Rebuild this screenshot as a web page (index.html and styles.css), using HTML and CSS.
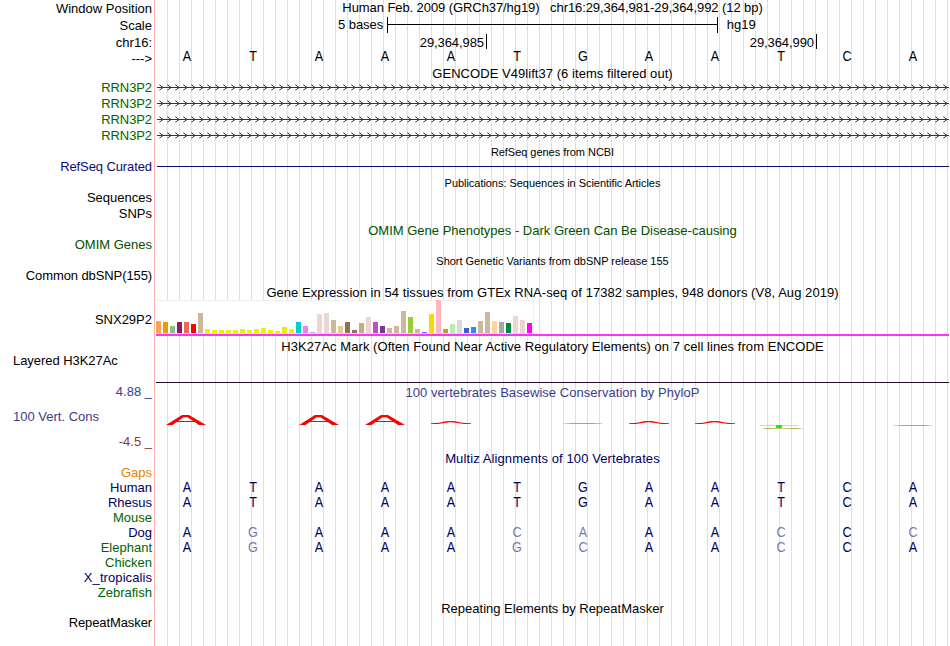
FILE: index.html
```
<!DOCTYPE html>
<html lang="en">
<head>
<meta charset="utf-8">
<title>Genome Browser</title>
<link rel="stylesheet" href="styles.css">
</head>
<body>
<main class="browser">
  <div class="row ruler"><div class="label">Window Position</div><div class="track title t-pos">Human Feb. 2009 (GRCh37/hg19) &nbsp; chr16:29,364,981-29,364,992 (12 bp)</div></div>
  <div class="row ruler"><div class="label">Scale</div><div class="track scale"><span class="scale-text">5 bases</span><span class="scale-bar"></span><span>hg19</span></div></div>
  <div class="row ruler"><div class="label">chr16:</div><div class="track ticks"><span class="tick first">29,364,985</span><span class="tick">29,364,990</span></div></div>
  <div class="row bases-row"><div class="label arrow-label">---&gt;</div><div class="track bases" data-seq="ATAAATGAATCA"></div></div>

  <div class="row head"><div class="track title t-gencode">GENCODE V49lift37 (6 items filtered out)</div></div>
  <div class="row gene"><div class="label green tight">RRN3P2</div><div class="track chevrons"></div></div>
  <div class="row gene"><div class="label green tight">RRN3P2</div><div class="track chevrons"></div></div>
  <div class="row gene"><div class="label green tight">RRN3P2</div><div class="track chevrons"></div></div>
  <div class="row gene"><div class="label green tight">RRN3P2</div><div class="track chevrons"></div></div>

  <div class="row sub"><div class="track title small">RefSeq genes from NCBI</div></div>
  <div class="row gene"><div class="label blue tight">RefSeq Curated</div><div class="track"><div class="solid-line"></div></div></div>

  <div class="row sub"><div class="track title small">Publications: Sequences in Scientific Articles</div></div>
  <div class="row gene"><div class="label">Sequences</div></div>
  <div class="row gene"><div class="label">SNPs</div></div>

  <div class="row sub"><div class="track title green-dark t-omim">OMIM Gene Phenotypes - Dark Green Can Be Disease-causing</div></div>
  <div class="row gene"><div class="label green-dark">OMIM Genes</div></div>

  <div class="row sub"><div class="track title small t-snp">Short Genetic Variants from dbSNP release 155</div></div>
  <div class="row gene"><div class="label tight">Common dbSNP(155)</div></div>

  <div class="row gtex-head"><div class="track title t-gtex">Gene Expression in 54 tissues from GTEx RNA-seq of 17382 samples, 948 donors (V8, Aug 2019)</div></div>
  <div class="row gtex"><div class="label">SNX29P2</div><div class="track"><div class="bars" id="bars"></div><div class="gene-model"></div></div></div>

  <div class="row gtex-head"><div class="track title t-h3k">H3K27Ac Mark (Often Found Near Active Regulatory Elements) on 7 cell lines from ENCODE</div></div>
  <div class="row layered"><div class="label left">Layered H3K27Ac</div><div class="track"></div></div>

  <div class="row phylop">
    <div class="cons-labels">
      <span class="cons-max">4.88 _</span>
      <span class="cons-name">100 Vert. Cons</span>
      <span class="cons-min">-4.5 _</span>
    </div>
    <div class="track">
      <div class="title phylop-title t-phylop">100 vertebrates Basewise Conservation by PhyloP</div>
      <svg class="logo" width="795" height="24" viewBox="155 410 795 24">
        <defs>
          <g id="tall"><path d="M0 15L16 5H23L40 15H33L21.500 7.200H17.500L6.500 15Z" fill="#f00"/><path d="M10 11.500H29" stroke="#f00"/></g>
          <path id="low" d="M0 13.300L8 12.700L16 11H23L31 12.700L40 13.300V14H33L21 12.200H18L7 14H0Z" fill="#f00"/>
          <linearGradient id="fadeRed" gradientUnits="objectBoundingBox"><stop offset="0" stop-color="#f77" stop-opacity=".3"/><stop offset=".25" stop-color="#f77"/><stop offset=".75" stop-color="#f77"/><stop offset="1" stop-color="#f77" stop-opacity=".3"/></linearGradient>
          <linearGradient id="fadeOlive"><stop offset="0" stop-color="#aaaa44" stop-opacity=".3"/><stop offset=".15" stop-color="#aaaa44"/><stop offset=".5" stop-color="#aaaa44" stop-opacity=".5"/><stop offset=".85" stop-color="#aaaa44"/><stop offset="1" stop-color="#aaaa44" stop-opacity=".3"/></linearGradient>
        </defs>
        <use href="#tall" x="166" y="410"/><use href="#tall" x="299" y="410"/><use href="#tall" x="365" y="410"/>
        <use href="#low" x="431" y="410"/><use href="#low" x="629" y="410"/><use href="#low" x="695" y="410"/>
        <rect x="563" y="423" width="40" height="1" fill="url(#fadeRed)"/>
        <rect x="893" y="425" width="40" height="1" fill="url(#fadeRed)"/>
        <rect x="760" y="425" width="38" height="1" fill="#99ff99"/>
        <rect x="762" y="428" width="40" height="1" fill="url(#fadeOlive)"/>
        <path d="M776 425H782V428H776Z" fill="#0f0"/>
      </svg>
    </div>
  </div>

  <div class="row align"><div class="track title navy t-multiz">Multiz Alignments of 100 Vertebrates</div></div>
  <div class="row align"><div class="label orange">Gaps</div></div>
  <div class="row align navy"><div class="label">Human</div><div class="track bases" data-seq="ATAAATGAATCA"></div></div>
  <div class="row align navy"><div class="label">Rhesus</div><div class="track bases" data-seq="ATAAATGAATCA"></div></div>
  <div class="row align"><div class="label green">Mouse</div></div>
  <div class="row align navy"><div class="label">Dog</div><div class="track bases" data-seq="AgAAAcaAAcCc"></div></div>
  <div class="row align navy"><div class="label green">Elephant</div><div class="track bases" data-seq="AgAAAgcAAcCA"></div></div>
  <div class="row align"><div class="label green">Chicken</div></div>
  <div class="row align navy"><div class="label loose">X_tropicalis</div></div>
  <div class="row align"><div class="label green">Zebrafish</div></div>
  <div class="row align"><div class="track title">Repeating Elements by RepeatMasker</div></div>
  <div class="row align"><div class="label tight">RepeatMasker</div></div>
</main>
<script src="tracks.js"></script>
</body>
</html>
```
FILE: styles.css
```
* { box-sizing: border-box; }
body { margin: 0; background: #fff; color: #000; font: 13px/15px "Liberation Sans", Arial, sans-serif; }
.browser {
  width: 950px; height: 646px; overflow: hidden;
  background:
    linear-gradient(#ffb4b4, #ffb4b4) 154px 0 / 1px 100% no-repeat,
    repeating-linear-gradient(90deg, #dcdcf8 0 1px, transparent 1px 12px) 167px 0 / 783px 100% no-repeat;
}
.row { display: grid; grid-template-columns: 152px 795px; column-gap: 3px; align-items: center; height: 16px; white-space: nowrap; }
.label { grid-column: 1; text-align: right; }
.track { grid-column: 2; height: 100%; }
.title { text-align: center; }
.small { font-size: 11px; line-height: 18px; letter-spacing: -.04px; }
.tight { letter-spacing: -.1px; }
.loose { letter-spacing: .08px; }
.ruler { height: 17px; }
.bases-row, .align, .sub { height: 15px; }
.head { height: 13px; }
.gtex-head { height: 16px; }
.gtex-head .title { line-height: 19px; }
.sub .title { line-height: 18px; }

.t-pos { letter-spacing: -.08px; }
.t-gencode { letter-spacing: .05px; }
.t-gtex, .t-h3k { letter-spacing: .055px; }
.t-phylop { letter-spacing: .04px; }
.t-multiz { letter-spacing: .1px; }
.sub .t-omim { line-height: 19px; }
.t-snp { letter-spacing: -.02px; }
.gtex-head .t-h3k { line-height: 17px; }

.green { color: #006400; }
.green-dark { color: #005000; }
.blue { color: #0c0c78; }
.navy { color: #00005a; }
.navy .green { color: #006400; }
.orange { color: #e68200; }

.scale { display: flex; align-items: flex-start; line-height: 16px; padding-left: 183px; }
.scale-text { letter-spacing: -.05px; }
.scale-bar { width: 331px; height: 16px; margin: 0 9px 0 3.500px; border: solid #000; border-width: 0 1px; background: linear-gradient(#000, #000) 0 7px / 100% 1px no-repeat; }
.ticks { display: flex; }
.tick { width: 330px; height: 15px; padding-right: 2px; border-right: 1px solid #000; text-align: right; line-height: 17px; letter-spacing: -.08px; }
.tick.first { width: 332px; }

.bases { display: grid; grid-template-columns: repeat(12, 66px); text-align: center; font-size: 14px; margin-left: -1px; }
.bases span { transform: scaleX(.9); }
.bases-row .bases { line-height: 11px; }
.align .bases { line-height: 13px; }
.align .label { line-height: 13px; height: 15px; }
.mismatch { color: #7878aa; }

.chevrons svg { display: block; }
.solid-line { height: 1px; margin: 8px 1px 0 2px; background: #0c0c78; }

.gtex { height: 39px; }
.gtex .label { padding-top: 2px; }
.gtex .track { padding-top: 1px; }
.bars { display: flex; align-items: flex-end; gap: 2px; width: 378px; height: 34px; margin-left: 1px; border-bottom: 1px solid #ddd; background: linear-gradient(#f0f0f0, #f0f0f0) 0 0 / 100% 1px no-repeat, linear-gradient(#f0f0f0, #f0f0f0) 100% 0 / 1px 100% no-repeat, #fff; }
.bar { width: 5px; flex: none; }
.gene-model { height: 2px; margin: 0 1px; background: #ff33ff; }
.layered { height: 29px; align-items: start; }
.layered .label { padding-left: 13px; text-align: left; line-height: 13px; letter-spacing: -.05px; }
.layered .track { margin: 0 1px; border-bottom: 1px solid #280a28; }

.phylop { height: 68px; align-items: start; }
.cons-labels { display: flex; flex-direction: column; gap: 10px; color: #3c3c8c; padding-top: 1px; }
.cons-max, .cons-min { text-align: right; }
.cons-min { color: #823c3c; }
.cons-name { padding-left: 13px; }
.phylop-title { height: 27px; line-height: 19px; color: #3c3c8c; }
.logo { display: block; }
```
FILE: tracks.js
```
// Bases: lowercase letters are mismatches, drawn in a lighter tone.
for (const el of document.querySelectorAll(".bases")) {
  for (const b of el.dataset.seq) {
    const s = document.createElement("span");
    s.textContent = b.toUpperCase();
    if (b !== b.toUpperCase()) s.className = "mismatch";
    el.append(s);
  }
}

// Intron line with strand chevrons every 8px.
const px = (x, y) => `M${x} ${y}h1v1h-1z`;
let solid = "", soft = "";
for (let x = 4; x < 794; x += 8) {
  for (const d of [-1, 1]) {
    solid += px(x + 2, 8 + d) + px(x + 1, 8 + 2 * d);
    soft += px(x + 3, 8 + d) + px(x, 8 + 3 * d) + px(x, 8 + 2 * d);
  }
}
for (const el of document.querySelectorAll(".chevrons"))
  el.innerHTML = `<svg width="795" height="16" shape-rendering="crispEdges"><path d="M2 8h792v1h-792z${solid}" fill="#005a00"/><path d="${soft}" fill="#005a00" fill-opacity=".35"/></svg>`;

// Tissue expression: [height, colour]
const tissues = [[12,"ffa54f"],[11,"ee9a00"],[7,"8fbc8f"],[11,"8b1c62"],[11,"ee6a50"],[9,"ff0000"],[20,"cdb79e"],
[4,"eeee00"],[3,"eeee00"],[3,"eeee00"],[3,"eeee00"],[3,"eeee00"],[4,"eeee00"],[3,"eeee00"],[4,"eeee00"],[5,"eeee00"],[3,"eeee00"],[2,"eeee00"],[6,"eeee00"],[4,"eeee00"],
[11,"00cdcd"],[7,"ee82ee"],[1,"9ac0cd"],[19,"eed5d2"],[20,"eed5d2"],[13,"cdb79e"],[7,"eec591"],[11,"8b7355"],[3,"8b7355"],[10,"cdaa7d"],[16,"eed5d2"],[11,"b452cd"],[7,"7a378b"],[5,"cdb79e"],[7,"cdb79e"],[22,"cdb79e"],[16,"9acd32"],[4,"cdb79e"],[1,"7a67ee"],[19,"ffd700"],[33,"ffb6c1"],[4,"cd9b1d"],[9,"b4eeb4"],[13,"d9d9d9"],[5,"3a5fcd"],[6,"1e90ff"],[12,"cdb79e"],[21,"cdb79e"],[12,"ffd39b"],[11,"a6a6a6"],[10,"008b45"],[17,"eed5d2"],[13,"eed5d2"],[10,"ff00ff"]];
for (const [h, c] of tissues) {
  const bar = document.createElement("span");
  bar.className = "bar";
  bar.style.height = h + "px";
  bar.style.background = "#" + c;
  document.getElementById("bars").append(bar);
}
```
